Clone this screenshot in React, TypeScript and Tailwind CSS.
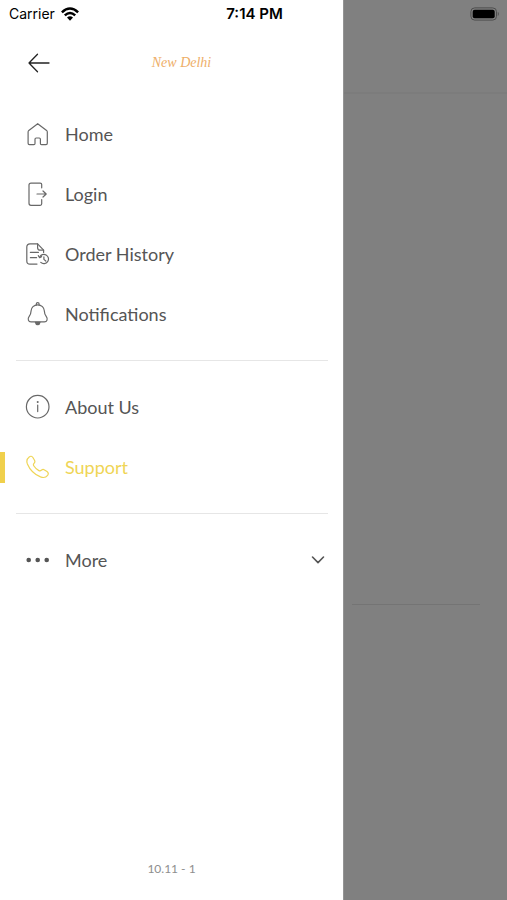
import React, { useState } from 'react';

type MenuItem = {
  id: string;
  label: string;
  icon: React.ReactNode;
};

const Icon: React.FC<{ children: React.ReactNode }> = ({ children }) => (
  <svg
    viewBox="0 0 26 26"
    className="size-[26px] shrink-0"
    fill="none"
    stroke="currentColor"
    strokeWidth="1.2"
    strokeLinecap="round"
    strokeLinejoin="round"
    aria-hidden="true"
  >
    {children}
  </svg>
);

const HomeIcon = () => (
  <Icon>
    <path d="M12.7 2.7 3.8 9.4Q3.1 10 3.1 10.9V22.3Q3.1 23.6 4.4 23.6H8.9Q10 23.6 10 22.5V18.2Q10 17 11.2 17H14.2Q15.4 17 15.4 18.2V22.5Q15.4 23.6 16.5 23.6H21Q22.3 23.6 22.3 22.3V10.9Q22.3 10 21.6 9.4Z" />
  </Icon>
);

const LoginIcon = () => (
  <Icon>
    <path d="M16.7 6.8V3.6Q16.7 2.1 15.2 2.1H6Q4 2.1 4 4.1V22.3Q4 24.3 6 24.3H15.2Q16.7 24.3 16.7 22.8V18.6" />
    <path d="M12 13H21M18 10 21.2 13 18 16" />
  </Icon>
);

const OrderHistoryIcon = () => (
  <Icon>
    <path d="M12 23.1H5Q1.8 23.1 1.8 19.9V6Q1.8 2.9 5 2.9H12.6L18.6 9.2V11.4" />
    <path d="M12.6 2.9V6.7Q12.6 9.2 15.2 9.2H18.6" />
    <path d="M5.4 11.4H13.4M5.4 16.7H11.6" />
    <path d="M14.6 16.3A4.6 4.6 0 1 1 15.8 21.4" />
    <path d="M13.3 14.7 14.6 16.7 16.6 15.6M18.9 15.9V18.4L20.8 20" />
  </Icon>
);

const BellIcon = () => (
  <Icon>
    <path d="M11.3 3.9V3.1Q11.3 1.7 12.7 1.7T14.1 3.1V3.9" />
    <path d="M12.7 3.8C8.8 3.8 6.2 6.5 6.1 9.8C6 12.6 5.5 13.7 4.2 15.4C2.2 18 3.4 20.9 6 20.9H19.4C22 20.9 23.2 18 21.2 15.4C19.9 13.7 19.4 12.6 19.3 9.8C19.2 6.5 16.6 3.8 12.7 3.8Z" />
    <path d="M10.4 21.3Q10.9 23.7 12.7 23.7T15 21.3Z" fill="currentColor" />
  </Icon>
);

const InfoIcon = () => (
  <Icon>
    <circle cx="12.7" cy="12.7" r="11.3" />
    <path d="M12.7 11V17.6" />
    <circle cx="12.7" cy="7.9" r="0.4" fill="currentColor" />
  </Icon>
);

const PhoneIcon = () => (
  <Icon>
    <path d="M4.2 2.9Q6.3 1.3 7.9 3.5L9.5 6.2Q10.5 8 9 9.4Q7.9 10.5 8.9 12C10.2 14 11.9 15.6 13.9 16.6Q15.3 17.3 16.4 16.2Q17.9 14.9 19.5 15.9L22 17.5Q24.2 19.2 22.6 21.4C20.9 23.6 18.4 24 15.5 22.9C9.6 20.4 4.8 15.6 2.4 9.9C1.3 7 1.9 4.6 4.2 2.9Z" />
  </Icon>
);

const DotsIcon = () => (
  <Icon>
    <g fill="currentColor" stroke="none">
      <circle cx="3.7" cy="13" r="2.3" />
      <circle cx="12.7" cy="13" r="2.3" />
      <circle cx="21.7" cy="13" r="2.3" />
    </g>
  </Icon>
);

const mainItems: MenuItem[] = [
  { id: 'home', label: 'Home', icon: <HomeIcon /> },
  { id: 'login', label: 'Login', icon: <LoginIcon /> },
  { id: 'orders', label: 'Order History', icon: <OrderHistoryIcon /> },
  { id: 'notifications', label: 'Notifications', icon: <BellIcon /> },
];

const infoItems: MenuItem[] = [
  { id: 'about', label: 'About Us', icon: <InfoIcon /> },
  { id: 'support', label: 'Support', icon: <PhoneIcon /> },
];

const StatusBar = () => (
  <div className="absolute inset-x-0 top-0 z-10 grid h-7 grid-cols-3 items-center pl-[9px] pr-[7px] font-['Inter','Liberation_Sans',sans-serif] text-sm text-black">
    <div className="flex items-center gap-1.5">
      <span>Carrier</span>
      <svg viewBox="0 0 18 14" className="h-3.5 w-[18px]" aria-hidden="true">
        <g fill="none" stroke="currentColor" strokeWidth="2.5">
          <path d="M0.9 5.3Q9 -2.2 17.1 5.3" />
          <path d="M3.8 8.4Q9 3.6 14.2 8.4" />
        </g>
        <path d="M6 10.5Q9 8 12 10.5L9 13.7Z" fill="currentColor" />
      </svg>
    </div>
    <span className="text-center text-[15px] font-semibold">7:14 PM</span>
    <svg viewBox="0 0 30 14" className="h-3.5 w-[30px] justify-self-end" aria-hidden="true">
      <rect x="0.9" y="0.9" width="25.6" height="12.2" rx="3.8" fill="none" stroke="#4d4d4d" />
      <rect x="2.7" y="2.7" width="22" height="8.6" rx="2" fill="#000" />
      <path d="M27.8 4.8Q29.8 7 27.8 9.2Z" fill="#4d4d4d" />
    </svg>
  </div>
);

const MenuLink: React.FC<{ item: MenuItem; active: boolean; onSelect: (id: string) => void }> = ({
  item,
  active,
  onSelect,
}) => (
  <li>
    <a
      href={`#${item.id}`}
      onClick={() => onSelect(item.id)}
      aria-current={active ? 'page' : undefined}
      className={`flex h-15 items-center ${active ? 'text-[#efd556]' : 'text-[#555]'}`}
    >
      <span className={`h-[31px] w-[5px] ${active ? 'bg-[#f0d04c]' : ''}`} />
      <span className={`ml-5 mr-3.5 ${active ? '' : 'text-[#686868]'}`}>{item.icon}</span>
      {item.label}
    </a>
  </li>
);

const App: React.FC = () => {
  const [activeId, setActiveId] = useState('support');
  const [moreOpen, setMoreOpen] = useState(false);

  return (
    <div className="relative flex min-h-screen bg-[#808080] font-['Lato',sans-serif]">
      <StatusBar />

      {/* Drawer */}
      <aside className="flex flex-1 flex-col bg-white pt-7">
        <header className="grid h-[70px] grid-cols-[1fr_auto_1fr] items-center px-7">
          <button type="button" aria-label="Back" className="w-[22px] text-[#222]">
            <svg
              viewBox="0 0 22 20"
              className="h-5 w-[22px]"
              fill="none"
              stroke="currentColor"
              strokeWidth="1.3"
              strokeLinecap="round"
              strokeLinejoin="round"
            >
              <path d="M21 10H1M9.5 1.2 1 10 9.5 18.8" />
            </svg>
          </button>
          <span className="pl-5 font-['Liberation_Serif',serif] text-sm italic text-[#eeae68]">New Delhi</span>
        </header>

        <nav className="pt-1.5 text-lg">
          <ul>
            {mainItems.map(item => (
              <MenuLink key={item.id} item={item} active={item.id === activeId} onSelect={setActiveId} />
            ))}
          </ul>
          <hr className="my-4 ml-4 mr-[15px] border-[#e6e6e6]" />
          <ul>
            {infoItems.map(item => (
              <MenuLink key={item.id} item={item} active={item.id === activeId} onSelect={setActiveId} />
            ))}
          </ul>
          <hr className="my-4 ml-4 mr-[15px] border-[#e6e6e6]" />
          <button
            type="button"
            aria-expanded={moreOpen}
            onClick={() => setMoreOpen(!moreOpen)}
            className="flex h-15 w-full items-center gap-3.5 pl-[25px] pr-[18px] text-[#555]"
          >
            <DotsIcon />
            More
            <svg
              viewBox="0 0 14 10"
              className="ml-auto h-2.5 w-3.5"
              fill="none"
              stroke="currentColor"
              strokeWidth="1.6"
              strokeLinecap="round"
              strokeLinejoin="round"
              aria-hidden="true"
            >
              <path d="M1.5 2 7 7.6 12.5 2" />
            </svg>
          </button>
        </nav>

        <p className="mt-auto pb-[23px] text-center text-xs text-[#8e8e8e]">10.11 - 1</p>
      </aside>

      {/* Dimmed page behind the drawer */}
      <div className="w-41 border-l border-[#949494]">
        <div className="h-[94px] border-b-2 border-[#7c7c7c]" />
        <div className="ml-2 mr-[27px] h-[511px] border-b border-[#747474]" />
      </div>
    </div>
  );
};

export default App;
